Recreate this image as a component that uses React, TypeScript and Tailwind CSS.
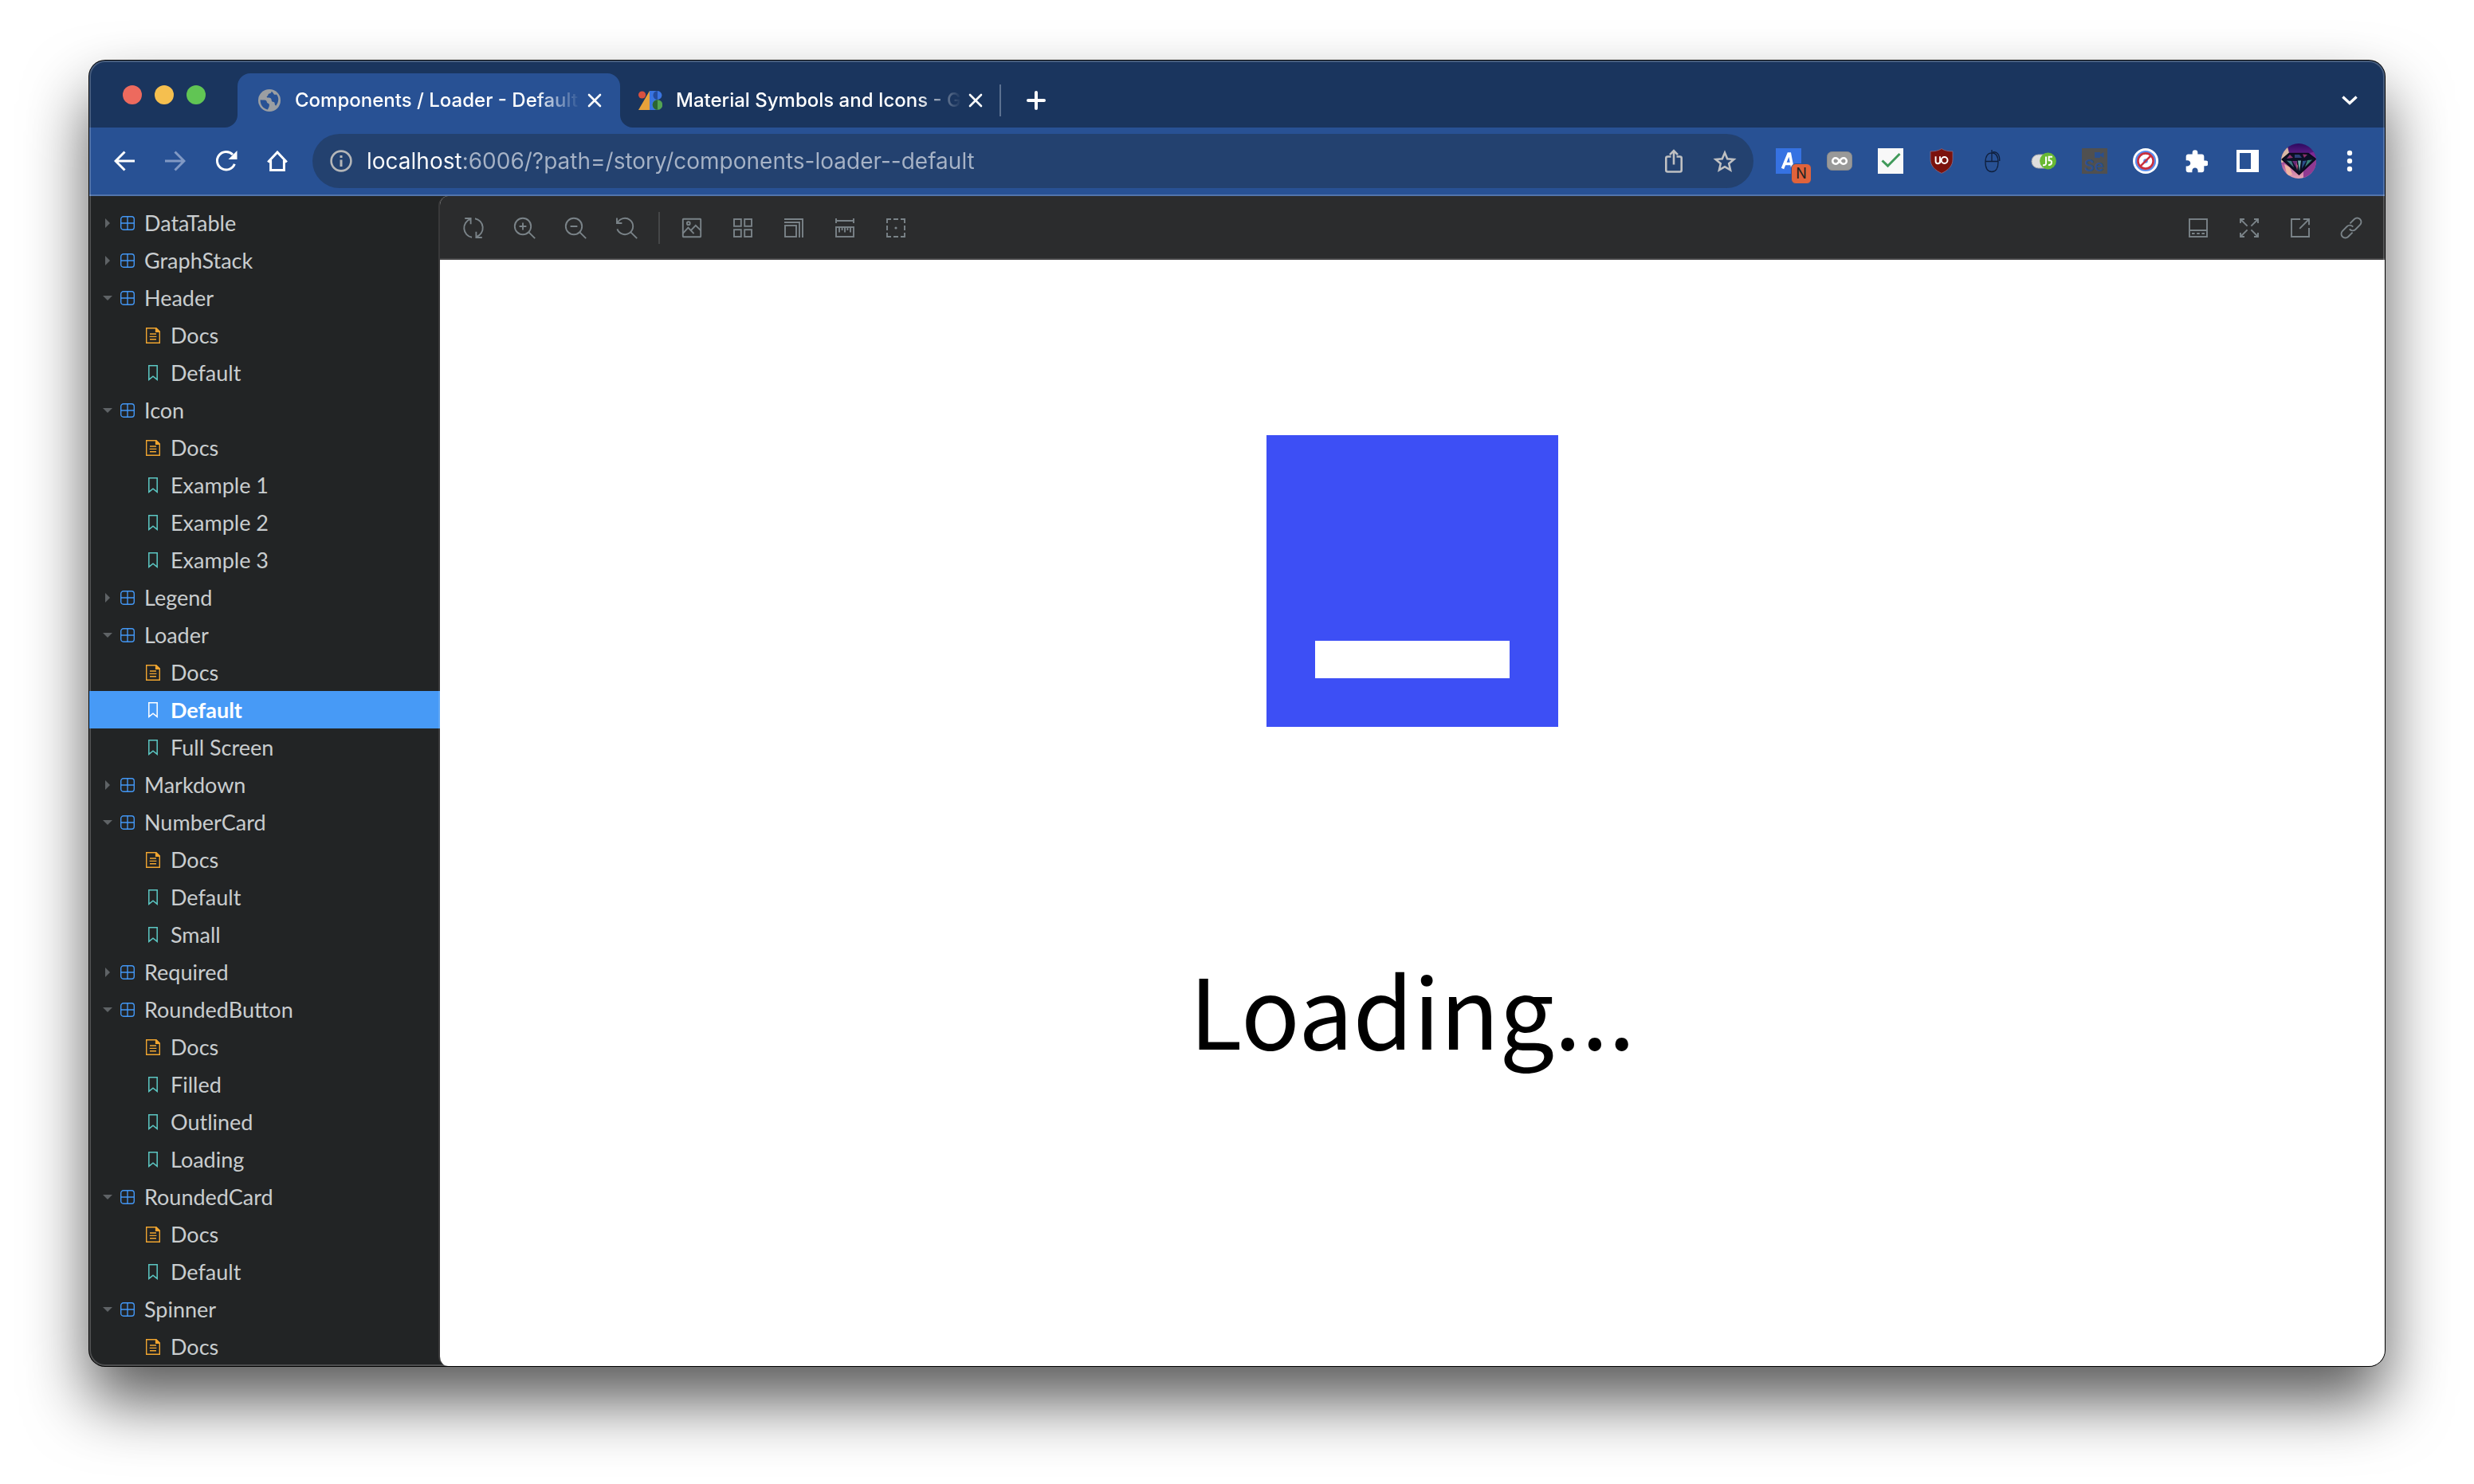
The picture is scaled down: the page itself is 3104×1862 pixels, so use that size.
import type { ReactNode } from 'react';

type Leaf = { label: string; kind: 'docs' | 'story'; active?: boolean };
type Group = { label: string; children?: Leaf[] };

const docs: Leaf = { label: 'Docs', kind: 'docs' };
const story = (label: string, active = false): Leaf => ({ label, kind: 'story', active });

const groups: Group[] = [
  { label: 'DataTable' },
  { label: 'GraphStack' },
  { label: 'Header', children: [docs, story('Default')] },
  { label: 'Icon', children: [docs, story('Example 1'), story('Example 2'), story('Example 3')] },
  { label: 'Legend' },
  { label: 'Loader', children: [docs, story('Default', true), story('Full Screen')] },
  { label: 'Markdown' },
  { label: 'NumberCard', children: [docs, story('Default'), story('Small')] },
  { label: 'Required' },
  { label: 'RoundedButton', children: [docs, story('Filled'), story('Outlined'), story('Loading')] },
  { label: 'RoundedCard', children: [docs, story('Default')] },
  { label: 'Spinner', children: [docs] },
];

function IconButton({ label, children }: { label: string; children: ReactNode }) {
  return (
    <button type="button" aria-label={label} className="relative flex h-12 w-16 shrink-0 items-center justify-center">
      {children}
    </button>
  );
}

/* Sidebar icons */

function ComponentIcon() {
  return (
    <svg viewBox="0 0 18 18" className="size-[18px] shrink-0" fill="none" stroke="#4397f5" strokeWidth="1.4">
      <rect x="0.7" y="0.7" width="16.6" height="16.6" rx="3.2" />
      <path d="M9 1v16M1 9h16" />
    </svg>
  );
}

function DocsIcon() {
  return (
    <svg viewBox="0 0 18 20" className="h-5 w-[18px]" fill="none" stroke="#f0a530" strokeWidth="1.4">
      <path d="M.7.7h12.2l4.4 4.4v14.2H.7z" />
      <path d="M12.6.7v4.6h4.7z" fill="#f0a530" />
      <path d="M5 8h8M4.6 11.4h8.8M5 14.8h8" />
    </svg>
  );
}

function BookmarkIcon({ active }: { active?: boolean }) {
  return (
    <svg viewBox="0 0 12 20" className="h-5 w-3" fill="none" stroke={active ? '#ffffff' : '#5cc8c4'} strokeWidth="1.5">
      <path d="M.8.8h10.4v17.6L6 14.2.8 18.4z" />
    </svg>
  );
}

function Arrow({ open }: { open: boolean }) {
  return (
    <svg viewBox="0 0 12 12" className="mr-[10px] size-3 shrink-0" fill="#5f6366">
      <path d={open ? 'M0 3h12L6 9z' : 'M3 0v12l6-6z'} />
    </svg>
  );
}

/* Story toolbar icons share a 14 unit grid */

function Tool({ label, children }: { label: string; children: ReactNode }) {
  return (
    <IconButton label={label}>
      <svg viewBox="0 0 14 14" className="size-7" fill="none" stroke="#7a8388" strokeWidth="0.95">
        {children}
      </svg>
    </IconButton>
  );
}

const leftTools = (
  <>
    <Tool label="Remount component">
      <path d="M6 12.9A6 6 0 0 1 5 1.4M1.6 1h3.7v3.6M8 1.1a6 6 0 0 1 1 11.5M12.4 13H8.7V9.4" />
    </Tool>
    <Tool label="Zoom in">
      <circle cx="6" cy="6" r="5.1" />
      <path d="M9.7 9.7l3.9 3.9M3.8 6h4.4M6 3.8v4.4" />
    </Tool>
    <Tool label="Zoom out">
      <circle cx="6" cy="6" r="5.1" />
      <path d="M9.7 9.7l3.9 3.9M3.8 6h4.4" />
    </Tool>
    <Tool label="Reset zoom">
      <path d="M1.3 4A5.1 5.1 0 1 1 1.2 7.7M9.7 9.7l3.9 3.9M1 .8V4h3.2" />
    </Tool>
  </>
);

const canvasTools = (
  <>
    <Tool label="Change background">
      <rect x="1.4" y="1.4" width="11.2" height="11.2" rx="0.3" />
      <circle cx="4.9" cy="4.1" r="0.95" />
      <path d="M1.4 10.4l3.3-3.6 3.6 3.8M6.4 8.6l3-3.2 3.2 3.2" />
    </Tool>
    <Tool label="Grid">
      <rect x="1.5" y="1.5" width="4.4" height="4.4" />
      <rect x="8.1" y="1.5" width="4.4" height="4.4" />
      <rect x="1.5" y="8.1" width="4.4" height="4.4" />
      <rect x="8.1" y="8.1" width="4.4" height="4.4" />
    </Tool>
    <Tool label="Viewport">
      <rect x="1.5" y="5.5" width="7" height="7" />
      <path d="M1 3.5h9.5V13M1 1.5h11.5V13" />
    </Tool>
    <Tool label="Measure">
      <rect x="1.5" y="6.5" width="11" height="6" />
      <path d="M1.5 1v3M12.5 1v3M1.5 2.5h11M3.5 6.5v3.2M5.3 6.5v2M7 6.5v3.2M8.7 6.5v2M10.5 6.5v3.2" />
    </Tool>
    <Tool label="Outline">
      <path d="M1.5 4V1.5H4M5.5 1.5h3M10 1.5h2.5V4M12.5 5.5v3M12.5 10v2.5H10M8.5 12.5h-3M4 12.5H1.5V10M1.5 8.5v-3" />
      <circle cx="7" cy="7" r="0.8" fill="#7a8388" stroke="none" />
    </Tool>
  </>
);

const rightTools = (
  <>
    <Tool label="Show addons">
      <rect x="1.5" y="1.5" width="11" height="11" />
      <path d="M1.5 8.5h11M3 10.5h1.8M6.1 10.5h1.8M9.2 10.5H11" />
    </Tool>
    <Tool label="Go full screen">
      <path d="M1.5 4V1.5H4M10 1.5h2.5V4M12.5 10v2.5H10M4 12.5H1.5V10M1.5 1.5l4.3 4.3M12.5 1.5L8.2 5.8M12.5 12.5L8.2 8.2M1.5 12.5l4.3-4.3" />
    </Tool>
    <Tool label="Open canvas in new tab">
      <path d="M7 1.5H1.5v11h11V7M8.9 1.5h3.6v3.6M12.5 1.5L6.6 7.4" />
    </Tool>
    <Tool label="Copy canvas link">
      <path d="M6.2 4.2l2.7-2.7a2.5 2.5 0 0 1 3.6 3.6L9.6 8a2.5 2.5 0 0 1-3.7-.3M7.8 9.8l-2.7 2.7a2.5 2.5 0 0 1-3.6-3.6L4.4 6a2.5 2.5 0 0 1 3.7.3" />
    </Tool>
  </>
);

/* Browser chrome */

function CloseIcon() {
  return (
    <svg viewBox="0 0 18 18" className="size-[18px]" stroke="#ffffff" strokeWidth="2.6" strokeLinecap="round">
      <path d="M2 2l14 14M16 2L2 16" />
    </svg>
  );
}

function GlobeIcon() {
  return (
    <svg viewBox="0 0 28 28" className="size-7">
      <circle cx="14" cy="14" r="14" fill="#9b9ea2" />
      <path
        d="M2.6 13.2c2.6.3 5.2.1 6.6.6 2.2.8 1 3.4 3.2 3.9 2 .4 1.500 2.200 1.300 3.500-.2 1.600-1.300 2.400-1.700 4.200C6.600 24.600 2.300 19.500 2.600 13.200z"
        fill="#285194"
      />
      <path
        d="M16.500 2.800c.3 2.100-1.500 2.300-3 2.800-1.600.5-.6 2.200-2.100 3-1.300.7-.7 1.900.2 2 2 .2 3.600-.3 4.600 1.500 1.100 2-.1 3.400 2.200 3.600 1.500.1 2.200.8 2.300 2.200.1 1.500.5 2.400 1.700 2.500 3-3.600 4.300-9.600.6-13.800-1.700.3-2.700.5-3.500-.6-.9-1.400-1.400-2.700-3-3.200z"
        fill="#285194"
      />
    </svg>
  );
}

function GoogleFontsIcon() {
  return (
    <svg viewBox="0 0 30 24" className="h-6 w-[30px]">
      <circle cx="4.600" cy="5" r="4.600" fill="#d9503f" />
      <path d="M14 0v24H0z" fill="#e8a23a" />
      <path d="M14 0h10v24H14z" fill="#3a74e0" />
      <circle cx="24" cy="5.500" r="5.400" fill="#3a74e0" />
      <path d="M24 0v11a5.500 5.500 0 0 1 0-11z" fill="#244c9e" />
      <circle cx="24" cy="17.500" r="6.300" fill="#53a353" />
      <path d="M24 11.200v12.600a6.300 6.300 0 0 1 0-12.600z" fill="#2b6434" />
    </svg>
  );
}

function Tab({ title, active, icon }: { title: string; active?: boolean; icon: ReactNode }) {
  return (
    <div
      className={
        active
          ? 'relative flex h-[68px] w-[480px] items-center rounded-t-2xl bg-[#285194] pl-6'
          : 'relative flex h-[68px] w-[476px] items-center pl-[22px]'
      }
    >
      {active && (
        <>
          <svg viewBox="0 0 16 16" className="absolute bottom-0 -left-4 size-4" fill="#285194">
            <path d="M16 0v16H0A16 16 0 0 0 16 0z" />
          </svg>
          <svg viewBox="0 0 16 16" className="absolute -right-4 bottom-0 size-4" fill="#285194">
            <path d="M0 0v16h16A16 16 0 0 1 0 0z" />
          </svg>
        </>
      )}
      <span className="flex w-8 items-center justify-center">{icon}</span>
      <a
        href="#tab"
        aria-current={active ? 'page' : undefined}
        className="ml-4 w-[358px] text-2xl font-medium whitespace-nowrap text-white [mask-image:linear-gradient(to_right,#000_calc(100%-56px),transparent)]"
      >
        {title}
      </a>
      <button type="button" aria-label={`Close ${title}`} className="-ml-1.5 flex size-12 items-center justify-center">
        <CloseIcon />
      </button>
    </div>
  );
}

function TabStrip() {
  return (
    <div className="flex h-[84px] shrink-0 bg-[#1a355e]">
      <div className="flex w-[186px] gap-4 pt-[31px] pl-[42px]">
        <button type="button" aria-label="Close window" className="size-6 rounded-full bg-[#ed6a5e]" />
        <button type="button" aria-label="Minimize window" className="size-6 rounded-full bg-[#f5bf4f]" />
        <button type="button" aria-label="Zoom window" className="size-6 rounded-full bg-[#61c554]" />
      </div>
      <div className="flex items-center self-end">
        <Tab active title="Components / Loader - Default" icon={<GlobeIcon />} />
        <Tab title="Material Symbols and Icons - G" icon={<GoogleFontsIcon />} />
        <span className="h-10 w-0.5 bg-[#5b7090]" />
        <button type="button" aria-label="New tab" className="ml-3 flex h-12 w-16 items-center justify-center">
          <svg viewBox="0 0 24 24" className="size-6" stroke="#ffffff" strokeWidth="4" strokeLinecap="round">
            <path d="M12 2v20M2 12h20" />
          </svg>
        </button>
      </div>
      <div className="ml-auto flex items-center self-stretch pt-4 pr-3">
        <IconButton label="Search tabs">
          <svg viewBox="0 0 20 12" className="h-3 w-5" fill="none" stroke="#ffffff" strokeWidth="3.4">
            <path d="M1.400 1.400l8.600 8 8.600-8" />
          </svg>
        </IconButton>
      </div>
    </div>
  );
}

const extensions = (
  <>
    <IconButton label="Autofill extension">
      <span className="relative flex size-8 items-center justify-center bg-[#3672e2]">
        <svg viewBox="0 0 32 32" className="size-8" fill="none" stroke="#ffffff" strokeWidth="3.600">
          <path d="M8.500 25.500L16 7h1.500l3.500 18.500M11 19.500h9" />
        </svg>
        <span className="absolute top-[19px] left-[19px] flex h-[26px] w-[26px] items-center justify-center rounded-md border border-[#285194] bg-[#e0633b] text-lg leading-none text-[#222222]">
          N
        </span>
      </span>
    </IconButton>
    <IconButton label="Loop extension">
      <svg viewBox="0 0 32 24" className="h-6 w-8">
        <rect x="0.500" y="0.500" width="31" height="23" rx="6" fill="#999999" stroke="#8a8a8a" />
        <path
          d="M16 12c-1.800-2.600-3.200-3.800-5-3.800a3.800 3.800 0 0 0 0 7.600c1.800 0 3.200-1.200 5-3.800s3.200-3.800 5-3.800a3.800 3.800 0 0 1 0 7.600c-1.800 0-3.200-1.200-5-3.800z"
          fill="none"
          stroke="#ffffff"
          strokeWidth="2.600"
        />
      </svg>
    </IconButton>
    <IconButton label="Checker extension">
      <svg viewBox="0 0 32 32" className="size-8">
        <path d="M0 0h32v32H0z" fill="#f8f8f8" />
        <path d="M5.500 15.500l7 6.700L27.500 7" fill="none" stroke="#419a5a" strokeWidth="3" />
      </svg>
    </IconButton>
    <IconButton label="Blocker extension">
      <svg viewBox="0 0 30 32" className="h-8 w-[30px]">
        <path
          d="M15 .6c4 2.600 8.500 3.400 14 3.300v10C29 22 23.500 27.500 15 31.400 6.500 27.500 1 22 1 13.900v-10C6.500 4 11 3.200 15 .6z"
          fill="#7b120d"
          stroke="#8c6c85"
          strokeWidth="0.800"
        />
        <path
          d="M7.600 10.200v6.400a2.700 2.700 0 0 0 5.400 0v-6.400M13 19v-4.200"
          fill="none"
          stroke="#ffffff"
          strokeWidth="1.900"
        />
        <circle cx="18.600" cy="15" r="3.900" fill="none" stroke="#ffffff" strokeWidth="2" />
      </svg>
    </IconButton>
    <IconButton label="Mouse extension">
      <svg viewBox="0 0 20 30" className="h-[30px] w-5" fill="none" stroke="#0f1f3c" strokeWidth="1.300">
        <path d="M9 4.800c5 0 8 4 8 11.700s-3 12-8 12-8-4.300-8-12 3-11.700 8-11.700zM9 1v14.500M1 15.500h16M10 4c6-1.500 9 3.500 8.800 11" />
      </svg>
    </IconButton>
    <IconButton label="JavaScript switcher">
      <svg viewBox="0 0 32 22" className="h-[22px] w-8">
        <rect x="1" y="3" width="24" height="17" rx="8.500" fill="#dedede" stroke="#aaaaaa" />
        <circle cx="21.500" cy="11" r="10.400" fill="#69b934" />
        <path
          d="M19 5.500v8c0 2.200-1 3-4 2.800M27 5.800h-4.400v4.400c3 0 3.600.8 3.400 3-.2 2.300-1.300 3-4 2.800"
          fill="none"
          stroke="#ffffff"
          strokeWidth="2"
        />
      </svg>
    </IconButton>
    <IconButton label="Selenium IDE">
      <span className="relative flex size-8 items-end bg-[#505050] pl-[3px] text-[20px] leading-5 font-semibold text-[#2b4f8c]">
        Se
        <svg viewBox="0 0 12 7" className="absolute top-[5px] left-4 h-[7px] w-3" fill="#2b4f8c">
          <path d="M0 0h7v2.500L11.500 0v7L7 4.500V7H0z" />
        </svg>
      </span>
    </IconButton>
    <IconButton label="Ad blocker">
      <svg viewBox="0 0 32 32" className="size-8" fill="none">
        <circle cx="16" cy="16" r="16" fill="#ffffff" />
        <circle cx="16" cy="16" r="11.800" stroke="#5a8dee" strokeWidth="2.600" />
        <circle cx="16" cy="16" r="2.800" fill="#5a8dee" />
        <circle cx="16" cy="16" r="9.600" stroke="#c9303e" strokeWidth="2.600" />
        <path d="M9.200 22.800L22.800 9.200" stroke="#c9303e" strokeWidth="2.600" />
      </svg>
    </IconButton>
    <IconButton label="Extensions">
      <svg viewBox="1.500 1 21 21.500" className="h-[29px] w-7" fill="#ffffff">
        <path d="M20.500 11H19V7c0-1.100-.9-2-2-2h-4V3.500a2.500 2.500 0 0 0-5 0V5H4c-1.100 0-1.990.9-1.990 2v3.800H3.500c1.490 0 2.700 1.210 2.700 2.700s-1.210 2.700-2.700 2.700H2V20c0 1.100.9 2 2 2h3.800v-1.500c0-1.490 1.210-2.700 2.700-2.700s2.700 1.210 2.700 2.700V22H17c1.100 0 2-.9 2-2v-4h1.500a2.500 2.500 0 0 0 0-5z" />
      </svg>
    </IconButton>
    <IconButton label="Side panel">
      <svg viewBox="0 0 28 28" className="size-7" fill="#ffffff" fillRule="evenodd">
        <path d="M0 0h28v28H0zM4 4v20h14V4z" />
      </svg>
    </IconButton>
    <IconButton label="Profile">
      <svg viewBox="0 0 44 44" className="size-11 rounded-full">
        <defs>
          <linearGradient id="sky" x1="0" y1="0" x2="0" y2="1">
            <stop offset="0" stopColor="#2d0960" />
            <stop offset="0.300" stopColor="#5c1d84" />
            <stop offset="0.600" stopColor="#b05a9c" />
            <stop offset="1" stopColor="#e6a4b4" />
          </linearGradient>
        </defs>
        <path d="M0 0h44v44H0z" fill="url(#sky)" />
        <path d="M0 8l8-4 2 8-8 12H0z" fill="#d8b8a4" />
        <path d="M28 44V30l8-6 8-2v22z" fill="#8f3a92" />
        <path d="M4 26l7 4 3 9-6 2z" fill="#efb4a2" />
        <path d="M36 12l8-2v10l-4-2z" fill="#7d2a92" />
        <path d="M10 12.500h24l9.500 7L22.500 39 1 20z" fill="#0b1026" stroke="#090a18" strokeWidth="1.400" />
        <path d="M11 14l4 4-8 1zM27 13.500l6 .5-4 4z" fill="#8e2f6c" />
        <path d="M17 14h6l3 4h-9z" fill="#2b3f78" />
        <path d="M7 21.500l6 .5 3 8z" fill="#3f7a84" />
        <path d="M14 22l6 0 0 10z" fill="#6a2b78" />
        <path d="M21 21.500h4L23 35z" fill="#72b2ae" />
        <path d="M27 22l5-.5-6 10z" fill="#2c4f8a" />
        <path d="M33 21l6-.5-9 9z" fill="#3a8478" />
        <path d="M19 24l2 4-1 6z" fill="#d0607a" />
      </svg>
    </IconButton>
    <IconButton label="Browser menu">
      <svg viewBox="0 0 8 28" className="h-7 w-2" fill="#ffffff">
        <circle cx="4" cy="4" r="3.200" />
        <circle cx="4" cy="14" r="3.200" />
        <circle cx="4" cy="24" r="3.200" />
      </svg>
    </IconButton>
  </>
);

function AddressBar() {
  return (
    <div className="flex h-[86px] shrink-0 items-center border-b-2 border-[#5375ac] bg-[#285194] px-3">
      <IconButton label="Back">
        <svg viewBox="0 0 26 26" className="size-[26px]" fill="none" stroke="#ffffff" strokeWidth="3">
          <path d="M26 13H2.500M13.500 1.500L2 13l11.500 11.500" />
        </svg>
      </IconButton>
      <IconButton label="Forward">
        <svg viewBox="0 0 26 26" className="size-[26px]" fill="none" stroke="#8199c4" strokeWidth="3">
          <path d="M0 13h23.500M12.500 1.500L24 13 12.500 24.500" />
        </svg>
      </IconButton>
      <IconButton label="Reload">
        <svg viewBox="0 0 28 28" className="size-7">
          <path d="M24.300 17.800A11.300 11.300 0 1 1 22 6" fill="none" stroke="#ffffff" strokeWidth="3" />
          <path d="M27.500 1v11h-11z" fill="#ffffff" />
        </svg>
      </IconButton>
      <IconButton label="Home">
        <svg viewBox="0 0 26 26" className="size-[26px]" fill="none" stroke="#ffffff" strokeWidth="3">
          <path d="M1.200 14.500L13 2l11.800 12.500M4.600 12v12.400h16.800V12" />
        </svg>
      </IconButton>
      <form className="mx-3 flex h-[68px] min-w-0 flex-1 items-center rounded-full bg-[#23416f] pr-1 pl-5">
        <svg viewBox="0 0 28 28" className="mx-0.5 size-7 shrink-0" fill="none" stroke="#b4b6b8" strokeWidth="2.600">
          <circle cx="14" cy="14" r="12.400" />
          <path d="M14 12.500V21M14 7v3" strokeWidth="3" />
        </svg>
        <input
          aria-label="Address"
          defaultValue="localhost:6006/?path=/story/components-loader--default"
          className="ml-4 min-w-0 flex-1 bg-[linear-gradient(to_right,#ffffff_122px,#a7b3c6_122px)] bg-clip-text text-[28px] text-transparent outline-none"
        />
        <IconButton label="Share">
          <svg viewBox="0 0 22 30" className="h-[30px] w-[22px]" fill="none" stroke="#bfc0c2" strokeWidth="2.600">
            <path d="M7.500 9.500H3.300A2 2 0 0 0 1.300 11.500v15a2 2 0 0 0 2 2h15.400a2 2 0 0 0 2-2v-15a2 2 0 0 0-2-2h-4.200M11 19.500V2.500M6 7.200l5-5 5 5" />
          </svg>
        </IconButton>
        <IconButton label="Bookmark this tab">
          <svg viewBox="0 0 30 29" className="h-[29px] w-[30px]" fill="none" stroke="#bfc0c2" strokeWidth="2.500">
            <path d="M15 3.500l3.200 7.700 8.300.7-6.300 5.400 1.900 8.100L15 21.100l-7.100 4.300 1.900-8.100-6.300-5.400 8.300-.7z" />
          </svg>
        </IconButton>
      </form>
      {extensions}
    </div>
  );
}

function Sidebar() {
  return (
    <nav aria-label="Stories" className="z-10 w-[438px] shrink-0 pt-[10px] text-[27px] leading-[47px] text-[#c9cdcf]">
      <ul>
        {groups.map((group) => (
          <li key={group.label}>
            <button type="button" aria-expanded={!!group.children} className="flex h-[47px] w-full items-center pl-[17px]">
              <Arrow open={!!group.children} />
              <ComponentIcon />
              <span className="ml-3">{group.label}</span>
            </button>
            {group.children && (
              <ul>
                {group.children.map((leaf) => (
                  <li key={leaf.label}>
                    <a
                      href="#story"
                      aria-current={leaf.active ? 'page' : undefined}
                      className={
                        leaf.active
                          ? '-mr-0.5 flex h-[47px] items-center border-r-2 border-[#5ea6f5] bg-[#479af6] pl-[70px] font-bold text-white'
                          : 'flex h-[47px] items-center pl-[70px]'
                      }
                    >
                      <span className="flex w-5 justify-center">
                        {leaf.kind === 'docs' ? <DocsIcon /> : <BookmarkIcon active={leaf.active} />}
                      </span>
                      <span className="ml-3">{leaf.label}</span>
                    </a>
                  </li>
                ))}
              </ul>
            )}
          </li>
        ))}
      </ul>
    </nav>
  );
}

function Canvas() {
  return (
    <main className="flex min-w-0 flex-1 flex-col overflow-hidden rounded-l-xl border-l-2 border-[#39393a] bg-white">
      <div className="flex h-20 shrink-0 items-center border-b-2 border-[#454546] bg-[#2b2c2d] px-[10px] pt-0.5">
        {leftTools}
        <span className="mx-2 h-10 w-0.5 bg-[#454748]" />
        {canvasTools}
        <div className="ml-auto flex">{rightTools}</div>
      </div>
      <div className="flex flex-1 flex-col items-center pt-[220px]">
        <svg viewBox="0 0 366 366" className="size-[366px]">
          <path d="M0 0h366v366H0z" fill="#3d4ff5" />
          <path d="M61 258h244v47H61z" fill="#ffffff" />
        </svg>
        <p className="mt-[272px] font-['Noto_Sans_CJK_SC','Noto_Sans',sans-serif] text-[122px] leading-[160px] text-black">
          Loading...
        </p>
      </div>
    </main>
  );
}

export default function App() {
  return (
    <div className="flex min-h-screen flex-col bg-white px-28 pt-[76px] pb-[148px] font-['Inter','Liberation_Sans',sans-serif]">
      <div className="relative flex flex-1 flex-col overflow-hidden rounded-[20px] bg-[#222425] shadow-[0_0_0_1px_#000000,0_44px_80px_rgba(0,0,0,0.65)]">
        <TabStrip />
        <AddressBar />
        <div className="flex flex-1 font-['Lato','Open_Sans',sans-serif]">
          <Sidebar />
          <Canvas />
        </div>
        <div className="pointer-events-none absolute inset-0 rounded-[20px] border-2 border-white/20" />
      </div>
    </div>
  );
}
